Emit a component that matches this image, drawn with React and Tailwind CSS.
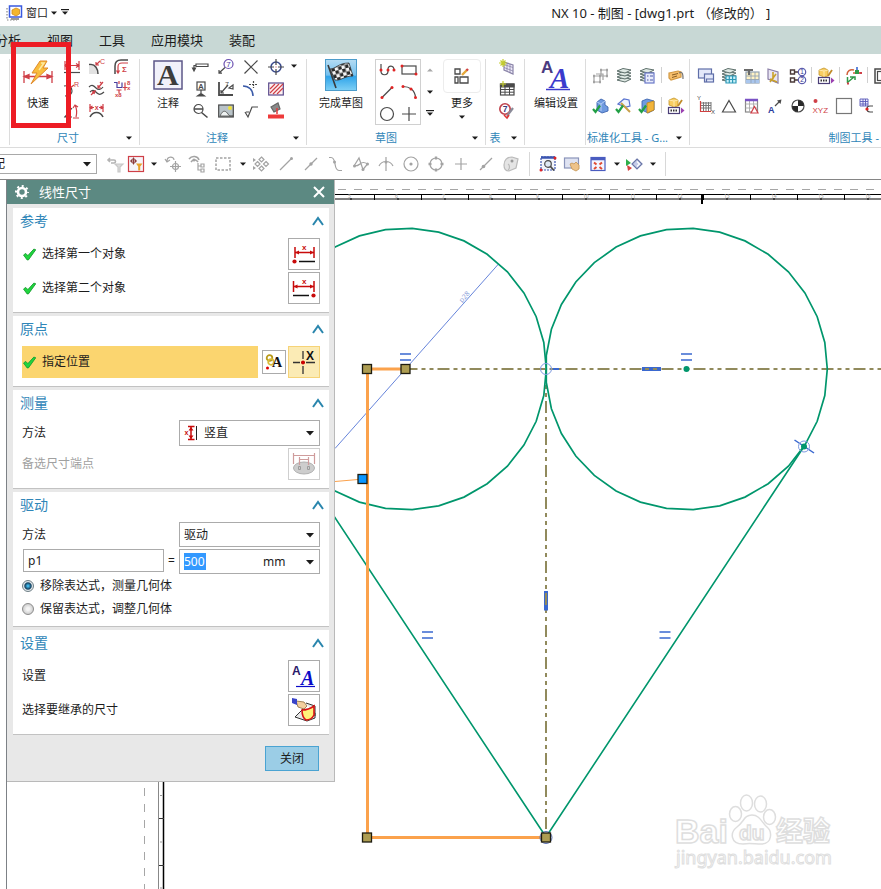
import React from 'react';

const RED = '#cf3f47';
const INK = '#4a4a4a';
const GREY = '#a3a3a3';

/* ---------- small building blocks ---------- */

function Icon({ children, className = 'h-4 w-4' }) {
  return (
    <svg viewBox="0 0 16 16" className={`block shrink-0 overflow-visible ${className}`} fill="none" stroke={INK} strokeWidth="1.2" aria-hidden="true">
      {children}
    </svg>
  );
}

function Caret({ up, bar, light, size = 'h-[6px] w-[6px]' }) {
  return (
    <svg viewBox="0 0 6 6" className={`block shrink-0 overflow-visible ${size}`} aria-hidden="true">
      {bar && <path d="M-1 -1h8v1.2h-8z" fill="#1c1c1c" />}
      <path d={up ? 'M0 4.5L3 1.5L6 4.5z' : 'M0 1.5h6L3 4.8z'} fill={light ? '#a8a8a8' : '#1c1c1c'} />
    </svg>
  );
}

function T({ x, y, size = 8, fill = INK, children, bold, serif, italic }) {
  return (
    <text
      x={x}
      y={y}
      fontSize={size}
      fill={fill}
      stroke="none"
      fontWeight={bold ? 700 : 400}
      fontStyle={italic ? 'italic' : 'normal'}
      fontFamily={serif ? 'Liberation Serif, serif' : 'Liberation Sans, sans-serif'}
    >
      {children}
    </text>
  );
}

const Layers = () => (
  <>
    {[11, 8, 5, 2].map((y) => (
      <path key={y} d={`M1 ${y + 1}l6-2.5 8 1.5-6 3z`} fill="#dfe9e4" stroke="#5d6f6b" strokeWidth="1" />
    ))}
  </>
);

const Tick = () => <path d="M0 11l2.5 3L7 7.5" stroke="#22a045" strokeWidth="2.2" />;

const Dot = ({ x, y, r = 1.5, fill = '#e02424' }) => <circle cx={x} cy={y} r={r} fill={fill} stroke="none" />;

const ICONS = {
  /* dimension group */
  dimLinear: (
    <>
      <path d="M1 2v9M15 2v9M1 6.5h14M4 4.5l-3 2 3 2M12 4.5l3 2-3 2" stroke={RED} />
      <path d="M0 13.5h16" />
    </>
  ),
  dimChamfer: (
    <>
      <path d="M0 7h4c3 0 5 4 5 8H0z" fill="#e2e2e2" stroke="none" />
      <path d="M0 5.5h2c4 0 7 4 7 9.5" strokeWidth="1.5" />
      <path d="M7 6l4-4M7 3v3h3" stroke={RED} />
      <T x={11} y={5} size={7} fill={RED}>C</T>
    </>
  ),
  dimThick: (
    <>
      <path d="M1 15V7c0-4 2-6 6-6h7" strokeWidth="1.5" />
      <path d="M4 14V8c0-3 1-4 4-4h6M2.5 11.5L4 14l1.5-2.5" stroke={RED} />
      <T x={8} y={13} size={8} fill={RED} bold>Σ</T>
    </>
  ),
  dimRadius: (
    <>
      <path d="M0 5c5-1 8 1 8 5s-3 5-7 5" />
      <path d="M6 7l4-3" stroke={RED} />
      <T x={10} y={6} size={7} fill={RED}>R</T>
    </>
  ),
  dimCurve: (
    <>
      <path d="M0 6c3-3 5-1 7 1s5 2 7-1M1 11c3-3 5-1 7 1s4 2 7-1" />
      <path d="M2 14l4-4M14 1l-5 6M3 11l3-1-1 3M9 4v3h3M11 1l2 2" stroke={RED} />
    </>
  ),
  dimOrdinate: (
    <>
      <path d="M0 1.5h3v5h5v-5" stroke="#4a3f9e" />
      <path d="M5 0v3M9 6.5h4M11 1.5v8M5 9v3M2.5 9h5" stroke={RED} />
      <T x={1} y={16} size={6} fill={RED} bold>x8</T>
      <T x={13} y={4} size={6} fill={RED} bold>8</T>
      <T x={13} y={9} size={6} fill={RED} bold>x</T>
    </>
  ),
  dimAngle: (
    <>
      <path d="M0 14h8L1 14l7-9" />
      <path d="M11 2c2 4 2 8 1 12M9 5l2-3 3 2M9 15h6" stroke={RED} />
    </>
  ),
  dimArc: (
    <>
      <path d="M1 1v8M14 1v8M1 4.5h4M10 4.5h4M3.5 3L1 4.5 3.5 6M11.5 3L14 4.5 11.5 6" stroke={RED} />
      <T x={5.8} y={6.5} size={7} fill={RED} bold>x</T>
      <path d="M1 14c3-6 10-6 13 0" strokeWidth="1.6" />
    </>
  ),
  /* annotation group */
  datumTag: <path d="M1 11V6.5h2M3 5h12v2.5H3zM-0.5 9L1 12l1.5-3z" />,
  balloon: (
    <>
      <circle cx="10.5" cy="5" r="4.5" stroke="#6a4fb0" />
      <T x={8.3} y={8} size={8} fill="#4a3aa0">7</T>
      <path d="M7 8.5L1 14M1 11v3.2h3" />
    </>
  ),
  cross: <path d="M1.5 1.5l13 13M14.5 1.5l-13 13" />,
  target: (
    <>
      <circle cx="8" cy="8" r="5" stroke="#3a4a8c" strokeWidth="1.5" />
      <path d="M8 0v6M8 10v6M0 8h6M10 8h6" />
      <path d="M7.5 8h1" stroke={RED} />
    </>
  ),
  datumA: (
    <>
      <rect x="4" y="1" width="8" height="8" fill="#fff" />
      <T x={5.3} y={7.8} size={7.5} bold>A</T>
      <path d="M8 9v5M4.5 15h7L8 12.5z" fill={INK} />
    </>
  ),
  surfaceAngle: (
    <>
      <path d="M1 1v13h14" strokeWidth="1.8" />
      <path d="M3 12l7-8M3 9v3h3" />
      <T x={7} y={6} size={7}>7</T>
      <path d="M11 7l4-3v4z" />
    </>
  ),
  intersect: (
    <>
      <path d="M0 5c6 0 10 4 10 10" stroke="#3a5aa8" strokeWidth="1.5" />
      <path d="M6 3.5h9M10.5 0v7" strokeDasharray="2 1" />
    </>
  ),
  hatch: (
    <>
      <rect x="0.7" y="2" width="14.6" height="12" fill="#fdf1f1" stroke="#5a4a8c" />
      <path d="M2 8l5-5M2 12l9-9M5 13L15 3M9 13l6-6" stroke={RED} />
    </>
  ),
  zoomOut: (
    <>
      <circle cx="5.5" cy="6" r="4.5" />
      <path d="M1 6h9M8.5 9.5l6 5" strokeWidth="1.6" />
    </>
  ),
  image: (
    <>
      <rect x="0.7" y="2" width="14.6" height="12" fill="#b9c3c8" />
      <path d="M2 13c3-7 6-5 8-2s3 2 5 2z" fill="#eef2f2" strokeWidth="0.8" />
      <Dot x={12} y={5} r={2} fill="#f0e23a" />
    </>
  ),
  surface: <path d="M2 9l3 5 4-10h6M3 9h3" />,
  paint: (
    <>
      <path d="M3 4l7-4 2 6-6 3z" fill="#8a8a8a" stroke="#666" />
      <path d="M9 5v6" stroke="#e43b3b" strokeWidth="1.5" />
      <rect x="0" y="11.5" width="16" height="4" fill="#ee3a3a" stroke="none" />
    </>
  ),
  /* sketch group */
  profile: (
    <>
      <path d="M2 2v7c0 5 7 5 7 0V7c0-4 6-4 6 1" />
      <Dot x={2} y={8} />
      <Dot x={9} y={8} />
      <Dot x={15} y={8} />
    </>
  ),
  rectangle: (
    <>
      <rect x="1" y="4" width="14" height="8" />
      <Dot x={1} y={4} />
      <Dot x={15} y={12} />
    </>
  ),
  line: (
    <>
      <path d="M3 13.5L13 3.5" />
      <Dot x={3} y={13.5} />
      <Dot x={13} y={3.5} />
    </>
  ),
  arc: (
    <>
      <path d="M2 2.5c6 0 12 3 12.5 11" />
      <Dot x={2} y={2.5} />
      <Dot x={10} y={5} />
      <Dot x={14.5} y={13.5} />
    </>
  ),
  circle: <circle cx="8" cy="8" r="6.5" />,
  plus: <path d="M8 1v14M1 8h14" />,
  more: (
    <>
      <path d="M1 1h5v5H1zM1 9h3v6H1zM6 9h8v6H6z" strokeWidth="1.3" />
      <path d="M8 7l5-5" stroke="#e5a83a" strokeWidth="2.4" />
      <path d="M12.5 2.5L14 1" stroke="#d04040" strokeWidth="2.4" />
    </>
  ),
  /* table group */
  tableNew: (
    <>
      <path d="M5 3l9 3v9l-9-4z" fill="#efecfa" stroke="#8a84a8" />
      <path d="M5 5.5l9 3M5 8.5l9 3.5M8 4v8M11 5v9" stroke="#8a84a8" strokeWidth="0.8" />
      <path d="M4 0v8M0 4h8M1.5 1.5l5 5M6.5 1.5l-5 5" stroke="#c3cc2e" />
    </>
  ),
  tableParts: (
    <>
      <rect x="1.5" y="3" width="13.5" height="11" fill="#fff" />
      <path d="M1.5 3H15v3H1.5z" fill="#4a4a4a" />
      <path d="M1.5 8.5H15M1.5 11.2H15M6 3v11M10.5 3v11" strokeWidth="1" />
      <path d="M4 0v6M1 3h6" stroke="#c3cc2e" />
    </>
  ),
  tableBalloon: (
    <>
      <circle cx="6" cy="6" r="5.2" stroke="#c0434d" strokeWidth="1.6" fill="#fff" />
      <T x={3.8} y={9} size={8.5} fill="#3a3a7c" bold>7</T>
      <path d="M8 13l6-8" stroke="#8a8a98" strokeWidth="2.2" />
      <path d="M5 12l3 3 2-3" stroke="#d33" strokeWidth="1.6" />
    </>
  ),
  /* standardisation group */
  frames: (
    <>
      <path d="M1 8h6v6H1zM8 2h6v6H8zM3 6h7v6" stroke={GREY} />
      <path d="M0 8h2M6 8h2M0 14h2M6 14h2M7 2h2M13 2h2M13 8h2" stroke={GREY} strokeWidth="2.4" />
    </>
  ),
  layers: <Layers />,
  layersList: (
    <>
      <Layers />
      <rect x="6" y="5" width="9" height="10" fill="#e8ecfb" stroke="#6a78c8" />
      <path d="M8 8h1.5M11 8h3M8 12h1.5M11 12h3" stroke="#4a58a8" />
    </>
  ),
  tag: (
    <>
      <path d="M1 5l9-2 3 1v5l-10 3-2-2z" fill="#f6bf6c" stroke="#d39a44" />
      <path d="M4 7l6-1.5M4 9.5l5-1.5" stroke="#7a5018" strokeWidth="0.9" />
      <path d="M11 5c4-2 4 2 4 6" stroke="#777" />
    </>
  ),
  checkPart: (
    <>
      <path d="M4 4l4-3 4 2v4l3 2v4l-6 2-5-3z" fill="#6f9ae0" stroke="#3f66b0" strokeWidth="0.9" />
      <path d="M4 4l4 2 4-3M8 6v7" stroke="#bcd2f6" strokeWidth="0.9" />
      <Tick />
    </>
  ),
  checkTool: (
    <>
      <path d="M2 6l6-5 5 1 1 6-4 1z" fill="#eef3ff" stroke="#5a74d0" />
      <path d="M5 5l9 9" stroke="#c8a04a" strokeWidth="2" />
      <Tick />
    </>
  ),
  checkBox: (
    <>
      <path d="M3 3l5-2 7 2v9l-6 3-6-3z" fill="#6f9ae0" stroke="#3f66b0" strokeWidth="0.9" />
      <path d="M8 5l7-2v9l-7 3z" fill="#f2b43a" stroke="#c08a20" strokeWidth="0.9" />
      <Tick />
    </>
  ),
  partCard: (
    <>
      <path d="M1 2l5-2 4 2v6l-4 1-5-2z" fill="#f7cd62" stroke="#c4962a" strokeWidth="0.8" />
      <path d="M1 2l5 1 4-1M6 3v6" stroke="#fff0c0" strokeWidth="0.8" />
      <path d="M10 8l4-6" stroke="#c08a2a" strokeWidth="1.8" />
      <rect x="0.5" y="9.5" width="11" height="6" fill="#fff" stroke="#4b3f78" />
      <path d="M2.5 12.5h7" stroke="#333" strokeWidth="2" strokeDasharray="1.5 1" />
      <path d="M13 9.5l3.5 3-3.5 3z" fill="#9b3fb0" stroke="none" />
    </>
  ),
  /* drafting tools group */
  sheets: (
    <>
      <rect x="0.5" y="1" width="13" height="9" fill="#e3e8fa" stroke="#5f6ea8" />
      <rect x="6.5" y="6" width="9" height="8" fill="#e3e8fa" stroke="#5f6ea8" />
      <path d="M8.5 14v-3H15" stroke="#5f6ea8" />
    </>
  ),
  layersTable: (
    <>
      <Layers />
      <path d="M5 8h10v7H5zM5 11.5h10M8.3 8v7M11.6 8v7" fill="#c9f0f8" stroke="#2f9ab8" />
    </>
  ),
  tableTool: (
    <>
      <rect x="2" y="4" width="13" height="11" fill="#fff2c4" stroke="#93a3b4" />
      <path d="M2 12h13v3H2z" fill="#a9c6ee" stroke="none" />
      <path d="M2 8h13M2 11.5h13M7 4v11M11 4v11" stroke="#93a3b4" strokeWidth="0.9" />
      <path d="M0 2h9M5 2v5" stroke="#6a6a6a" strokeWidth="2.2" />
    </>
  ),
  exportSheet: (
    <>
      <path d="M1 1l10 3v11L1 11z" fill="#e9e5f3" stroke="#8b7fa8" />
      <path d="M6 4v7M9 6l-6 8M3 11l7 3" stroke="#c9a02a" strokeWidth="1.6" />
    </>
  ),
  orderBalloon: (
    <>
      <path d="M0.5 2h4v4h-4zM0.5 10h4v4h-4zM5 4h3M5 12h3" stroke="#4a3a3a" strokeWidth="1.4" />
      <circle cx="12" cy="4" r="3.7" fill="#fff" stroke="#5c5cae" />
      <circle cx="12" cy="12" r="3.7" fill="#fff" stroke="#5c5cae" />
      <T x={10.3} y={6.3} size={6.5} fill="#3a3a8c">1</T>
      <T x={10.3} y={14.3} size={6.5} fill="#3a3a8c">2</T>
    </>
  ),
  csys: (
    <>
      <path d="M8 2C4 1 1 3 1 7M7 5h8" stroke="#d0603a" strokeWidth="1.5" />
      <path d="M1.5 9v6M2 14l6-5M4 9h5v3" stroke="#2f9a48" strokeWidth="1.5" />
      <rect x="9" y="2" width="4" height="4" fill="#2f9a48" stroke="none" />
      <path d="M11 -1v3" stroke="#3a6ad0" strokeWidth="1.6" />
      <path d="M13.5 5H16M1 15.5h2" stroke={RED} strokeWidth="2" />
    </>
  ),
  docFrame: (
    <>
      <rect x="1" y="1" width="14" height="14" strokeWidth="1.5" />
      <rect x="3.5" y="3.5" width="9" height="9" />
    </>
  ),
  gridXY: (
    <>
      <path d="M3 5h10M3 7.5h10M3 10h10M5.5 4v9M8 4v9M10.5 4v9M13 4v9" stroke="#777" strokeWidth="1" />
      <path d="M2.5 3v10.5H13" stroke="#d04040" />
      <T x={-1} y={2} size={6}>Y</T>
      <T x={13} y={16} size={6}>X</T>
    </>
  ),
  triangle: <path d="M8 2.5L14.5 14h-13z" />,
  tableDelta: (
    <>
      <rect x="1.5" y="2" width="12" height="12" fill="#fff" stroke="#888" />
      <path d="M1.5 6h12M1.5 10h12M5.5 2v12M9.5 2v12" stroke="#aaa" strokeWidth="0.9" />
      <path d="M1 2h13" stroke="#7a52c4" strokeWidth="2.5" />
      <path d="M10.5 8.5L14 15H7z" fill="#fff" stroke={RED} />
    </>
  ),
  arrowA: (
    <>
      <T x={1} y={15} size={9} fill="#2c3c9c" bold>A</T>
      <path d="M8 8l5-5" />
      <path d="M14.5 1.5l-1 4.5-3.5-3.5z" fill={INK} stroke="none" />
    </>
  ),
  centerMark: (
    <>
      <circle cx="8" cy="8" r="6" fill="#fff" />
      <path d="M8 8V2a6 6 0 0 1 6 6zM8 8v6a6 6 0 0 1-6-6z" fill="#2a2a2a" stroke="none" />
    </>
  ),
  xyz: (
    <>
      <Dot x={2.5} y={3} r={2} fill={RED} />
      <T x={-0.5} y={15} size={8} fill={RED}>XYZ</T>
    </>
  ),
  blank: <rect x="0.5" y="0.5" width="15" height="15" fill="#fff" stroke="#777" />,
  tableLink: (
    <>
      <path d="M1 1h8v7H1zM1 3.5h8M1 6h8M4 1v7M6.5 1v7" stroke="#5a5ab8" fill="#eef" strokeWidth="0.9" />
      <path d="M14 8h-3c-2 0-3 1-3 3s1 3 3 3h3" />
      <Dot x={8} y={11} r={1.6} fill="#d22" />
    </>
  ),
  /* selection bar */
  filterOff: (
    <>
      <path d="M1 4h6c2 0 2 3 0 3H4M3 2L1 4l2 2" stroke="#b4b4b4" strokeWidth="1.6" />
      <path d="M8 8h8l-3 3v5h-2v-5z" fill="#dcdcdc" stroke="#c8c8c8" />
    </>
  ),
  filterOn: (
    <>
      <rect x="0.5" y="0.5" width="15" height="15" fill="#f5f5fa" stroke={RED} />
      <circle cx="5.5" cy="5" r="2.2" stroke="#8a3a3a" strokeWidth="1" />
      <path d="M5.5 1.5v7M2 5h7" stroke="#8a3a3a" strokeWidth="1" />
      <path d="M8 7.5h6.5l-2.3 3v4h-2v-4z" fill="#e8a22a" stroke="none" />
    </>
  ),
  rotatePoint: (
    <>
      <path d="M2 5C2 0 9 0 9 4M0 3l2 3 3-2" stroke={GREY} />
      <circle cx="10.5" cy="10.5" r="3" stroke={GREY} />
      <path d="M10.5 5v11M5 10.5h11" stroke={GREY} />
    </>
  ),
  tree: (
    <>
      <path d="M0 3c3-4 9-3 10 1M2 6c2-3 5-3 7 0" stroke={GREY} strokeWidth="1.5" />
      <Dot x={5} y={4} fill={GREY} />
      <path d="M9 7v7h3M9 10h3M12 8h3v3h-3zM12 13h3v3h-3z" stroke={GREY} />
    </>
  ),
  marquee: <path d="M1 2h14v12H1z" stroke={GREY} strokeDasharray="2.5 1.5" strokeWidth="1.5" />,
  snapMove: (
    <>
      <path d="M8.5 1l2.5 2.5L8.5 6 6 3.5zM8.5 10l2.5 2.5L8.5 15 6 12.5zM13 5.5L15.500 8 13 10.5 10.500 8zM4.500 5.5L7 8l-2.500 2.5L2 8z" stroke={GREY} />
      <path d="M0 2l3 2-3 2zM0 10l3 2-3 2z" fill={GREY} stroke="none" />
    </>
  ),
  endPoint: (
    <>
      <path d="M2 14L13.5 2.5" stroke={GREY} />
      <Dot x={13.5} y={2.5} fill={GREY} />
    </>
  ),
  midPoint: (
    <>
      <path d="M2 14L14 2" stroke={GREY} />
      <Dot x={8} y={8} fill={GREY} r={1.7} />
    </>
  ),
  control: (
    <>
      <path d="M1 1.5h2c6 0 2 13 8 13h3" stroke={GREY} />
      <Dot x={6.5} y={6} fill={GREY} />
    </>
  ),
  spline: (
    <>
      <path d="M1 10L6 2l4 11.5L14.5 8M1 10c3 0 5-1 6-2s3-3 7.5 0" stroke={GREY} />
      <Dot x={1.5} y={10} fill={GREY} />
      <Dot x={10} y={13.5} fill={GREY} />
      <Dot x={14.5} y={8} fill={GREY} />
    </>
  ),
  crossPoint: (
    <>
      <path d="M8 1v14M1 10c3-6 11-6 14 0" stroke={GREY} />
      <Dot x={8} y={6} fill={GREY} />
    </>
  ),
  arcCenter: (
    <>
      <circle cx="8" cy="8" r="7" stroke={GREY} />
      <Dot x={8} y={8} fill={GREY} r={1.6} />
    </>
  ),
  quadrant: (
    <>
      <circle cx="8" cy="8" r="6" stroke={GREY} />
      <path d="M8 .5v3M8 12.5v3M.5 8h3M12.5 8h3" stroke={GREY} strokeWidth="2.4" />
    </>
  ),
  point: <path d="M8 2v12M2 8h12" stroke={GREY} />,
  onCurve: (
    <>
      <path d="M2 14L14 2" stroke={GREY} />
      <Dot x={5.5} y={10.5} fill={GREY} r={1.8} />
    </>
  ),
  onFace: (
    <>
      <path d="M1 9c0-5 3-8 8-8l6 2-2 9-7 3c-4 0-5-3-5-6z" fill="#e4e4e4" stroke="#bababa" />
      <path d="M5 14c2-1 2-5 0-6" stroke="#bababa" />
      <Dot x={9} y={5} fill="#999" />
    </>
  ),
  zoomBox: (
    <>
      <rect x="1" y="1" width="14" height="13" fill="#f2f4fb" stroke="#3a54b0" strokeDasharray="2 1" />
      <path d="M1 1.5h14" stroke="#3a54b0" strokeWidth="2.5" />
      <circle cx="8" cy="8" r="3.3" fill="#dfe9f5" />
      <path d="M10.5 10.5l3.5 4" strokeWidth="1.8" />
      <Dot x={1} y={14} />
      <Dot x={15} y={2} />
    </>
  ),
  pan: (
    <>
      <rect x="0.5" y="2" width="14" height="10" fill="#dfe3f2" stroke="#8a94ba" />
      <path d="M6 8l2-1 2 1 2-2 3 3v4l-3 2-4-2z" fill="#eec38a" stroke="#c49452" strokeWidth="0.8" />
    </>
  ),
  fit: (
    <>
      <rect x="1" y="1.5" width="14" height="13" fill="#f4f5ff" stroke="#4a5cc0" />
      <path d="M1 3h14" stroke="#4a5cc0" strokeWidth="2.5" />
      <path d="M4 6.5l2.5 2M12 6.5l-2.5 2M4 13l2.5-2M12 13l-2.5-2" stroke="#e04a32" strokeWidth="2" />
    </>
  ),
  orient: (
    <>
      <path d="M0 3l5 4-5 3z" fill="#2fae4a" stroke="none" />
      <path d="M1 9l5 3-4 3z" fill="#d84040" stroke="none" />
      <path d="M11 3l5 5-5 5-5-5z" fill="#c4cbe8" stroke="#6a76a8" />
      <path d="M11 5.5L13.5 8 11 10.5" stroke="#fff" />
    </>
  ),
};

function IconButton({ name, className = '' }) {
  return (
    <button type="button" aria-label={name} className={`flex shrink-0 justify-center ${className}`}>
      <Icon>{ICONS[name]}</Icon>
    </button>
  );
}

function Group({ label, className = '', children }) {
  return (
    <section className={`flex shrink-0 flex-col border-r border-[#dcdcdc] ${className}`}>
      <div className="flex flex-1">{children}</div>
      {label && (
        <div className="flex h-[14px] items-center whitespace-nowrap text-[11px] leading-[14px] text-[#2f86b8]">
          <span className="flex-1 text-center">{label}</span>
          <span className="flex w-5 justify-center">
            <Caret />
          </span>
        </div>
      )}
    </section>
  );
}

function BigButton({ label, className, children }) {
  return (
    <button type="button" className={`flex shrink-0 flex-col items-center text-[11px] leading-4 whitespace-nowrap text-[#1c1c1c] ${className}`}>
      <span className="flex h-9 items-start">{children}</span>
      {label}
    </button>
  );
}

const Divider = () => <span className="mx-[2px] mt-[7px] h-4 w-[2px] border-r border-[#d0d0d0]" />;

/* ---------- ribbon ---------- */

function Ribbon() {
  return (
    <div className="relative flex h-[94px] border-b border-[#dcdcdc] pt-[5px] pb-[2px]">
      <Group className="w-[10px]" />
      <Group label="尺寸" className="w-[130px] pl-[7px]">
        <BigButton label="快速" className="w-[42px]">
          <svg viewBox="0 0 32 26" className="h-[26px] w-8" aria-hidden="true">
            <path d="M2 12v12M30 12v12M2 17.5h28M7 15.5l-5 2 5 2zM25 15.5l5 2-5 2z" stroke={RED} strokeWidth="1.3" fill={RED} />
            <path d="M18 2h7l-4 7h5L9 25l6-11h-5z" fill="#f8bd3c" stroke="#e08a2a" strokeWidth="1" />
            <path d="M19 4h3l-5 7" stroke="#fde9a0" fill="none" strokeWidth="1.5" />
          </svg>
        </BigButton>
        <div className="grid w-[75px] auto-rows-[22px] grid-cols-3">
          {['dimLinear', 'dimChamfer', 'dimThick', 'dimRadius', 'dimCurve', 'dimOrdinate', 'dimAngle', 'dimArc'].map((n) => (
            <IconButton key={n} name={n} />
          ))}
        </div>
      </Group>
      <Group label="注释" className="w-[167px] pl-2">
        <BigButton label="注释" className="w-10">
          <svg viewBox="0 0 30 30" className="mt-px h-[30px] w-[30px] overflow-visible" aria-hidden="true">
            <rect x="1" y="1" width="28" height="28" fill="#f1f1fa" stroke="#5c5788" strokeWidth="1.5" />
            <T x={4} y={25} size={30} serif fill="#3c3c3c" bold>A</T>
          </svg>
        </BigButton>
        <div className="grid w-[100px] auto-rows-[22px] grid-cols-4">
          {['datumTag', 'balloon', 'cross', 'target', 'datumA', 'surfaceAngle', 'intersect', 'hatch', 'zoomOut', 'image', 'surface', 'paint'].map((n) => (
            <IconButton key={n} name={n} />
          ))}
        </div>
        <span className="flex w-3 justify-center pt-1">
          <Caret />
        </span>
      </Group>
      <Group label="草图" className="w-[179px]">
        <BigButton label="完成草图" className="ml-[10px] w-12">
          <svg viewBox="0 0 32 32" className="h-8 w-8" aria-hidden="true">
            <defs>
              <linearGradient id="sky" x1="0" y1="0" x2="0" y2="1">
                <stop offset="0" stopColor="#b5dcf3" />
                <stop offset="0.5" stopColor="#74c0ee" />
                <stop offset="0.55" stopColor="#2fa4ea" />
                <stop offset="1" stopColor="#7fd0f5" />
              </linearGradient>
              <pattern id="checker" width="7" height="7" patternUnits="userSpaceOnUse" patternTransform="rotate(-14)">
                <rect width="7" height="7" fill="#f4f4f4" />
                <path d="M0 0h3.5v3.5H0zM3.5 3.5H7V7H3.5z" fill="#2a2a2a" />
              </pattern>
            </defs>
            <rect x="0.5" y="0.5" width="31" height="31" fill="url(#sky)" stroke="#4c9ccb" />
            <path d="M5 10c6 0 8-6 19-6l4 13c-9 0-12 5-18 4z" fill="url(#checker)" stroke="#333" strokeWidth="0.8" />
            <path d="M3 6l8 23" stroke="#3a3a3a" strokeWidth="1.6" />
          </svg>
        </BigButton>
        <div className="ml-[10px] grid h-[66px] w-[46px] auto-rows-[22px] grid-cols-2 border border-[#d0d0d0]">
          {['profile', 'rectangle', 'line', 'arc', 'circle', 'plus'].map((n) => (
            <IconButton key={n} name={n} className="pt-[2px]" />
          ))}
        </div>
        <div className="flex h-[66px] w-[18px] flex-col items-center justify-around">
          <Caret up light />
          <Caret />
          <Caret bar />
        </div>
        <div className="ml-1 flex flex-col items-center">
          <BigButton label="更多" className="w-[38px]">
            <span className="flex h-[34px] w-[38px] items-center justify-center rounded border border-[#ececec]">
              <Icon>{ICONS.more}</Icon>
            </span>
          </BigButton>
          <span className="pt-[3px]">
            <Caret />
          </span>
        </div>
      </Group>
      <Group label="表" className="w-[39px]">
        <div className="ml-[13px] flex flex-col gap-[6px]">
          <IconButton name="tableNew" />
          <IconButton name="tableParts" />
          <IconButton name="tableBalloon" />
        </div>
      </Group>
      <Group className="w-[61px] pl-[2px]">
        <BigButton label="编辑设置" className="w-[58px]">
          <svg viewBox="0 0 30 30" className="mt-[2px] h-[30px] w-[30px] overflow-visible" aria-hidden="true">
            <T x={0} y={12} size={17} fill="#4a3a80" bold>A</T>
            <T x={9} y={27} size={29} fill="#3a3acc" bold serif italic>A</T>
            <path d="M5 28.5h24" stroke="#3a3acc" strokeWidth="1.5" />
          </svg>
        </BigButton>
      </Group>
      <Group label="标准化工具 - G..." className="w-[104px]">
        <div className="ml-[3px] grid content-start pt-px">
          <div className="flex h-[30px]">
            {['frames', 'layers', 'layersList'].map((n) => (
              <IconButton key={n} name={n} className="w-[23px] pt-2" />
            ))}
            <Divider />
            <IconButton name="tag" className="w-[23px] pt-2" />
          </div>
          <div className="flex h-[30px]">
            {['checkPart', 'checkTool', 'checkBox'].map((n) => (
              <IconButton key={n} name={n} className="w-[23px] pt-2" />
            ))}
            <Divider />
            <IconButton name="partCard" className="w-[23px] pt-2" />
          </div>
        </div>
      </Group>
      <section className="flex min-w-0 flex-1 flex-col overflow-hidden">
        <div className="flex-1 pt-px pl-1">
          <div className="flex h-[30px]">
            {['sheets', 'layersTable', 'tableTool', 'exportSheet', 'orderBalloon'].map((n) => (
              <IconButton key={n} name={n} className="w-[23px] pt-2" />
            ))}
            <Divider />
            <IconButton name="partCard" className="w-[23px] pt-2" />
            <Divider />
            <IconButton name="csys" className="w-[23px] pt-2" />
            <Divider />
            <IconButton name="docFrame" className="w-[23px] pt-2" />
          </div>
          <div className="flex h-[30px]">
            {['gridXY', 'triangle', 'tableDelta', 'arrowA', 'centerMark', 'xyz', 'blank', 'tableLink'].map((n) => (
              <IconButton key={n} name={n} className="w-[23px] pt-2" />
            ))}
          </div>
        </div>
        <div className="h-[14px] pr-[2px] text-right text-[11px] leading-[14px] whitespace-nowrap text-[#2f86b8]">制图工具 -</div>
      </section>
      <div className="pointer-events-none absolute -top-3 left-[11px] h-[86px] w-[60px] border-[5px] border-[#ed1c24]" />
    </div>
  );
}

function SelectionBar() {
  const snaps = ['snapMove', 'endPoint', 'midPoint', 'control', 'spline', 'crossPoint', 'arcCenter', 'quadrant', 'point', 'onCurve', 'onFace'];
  return (
    <div className="flex h-8 items-center overflow-hidden border-b border-[#858585]">
      <div className="relative -ml-3 w-[109px]">
        <select aria-label="装配范围" className="block h-5 w-full appearance-none border border-[#a9a9a9] bg-white pl-1 text-xs leading-4 text-[#1c1c1c]">
          <option>配</option>
        </select>
        <span className="pointer-events-none absolute top-[6px] right-[6px]">
          <Caret size="h-2 w-2" />
        </span>
      </div>
      <IconButton name="filterOff" className="ml-[6px] w-[23px]" />
      <IconButton name="filterOn" className="w-5" />
      <span className="flex w-[15px] justify-center"><Caret /></span>
      <IconButton name="rotatePoint" className="w-6" />
      <IconButton name="tree" className="w-6" />
      <IconButton name="marquee" className="w-7" />
      <span className="flex w-[11px] justify-center"><Caret /></span>
      {snaps.map((n) => (
        <IconButton key={n} name={n} className="w-[25px]" />
      ))}
      <span className="mx-[6px] h-6 border-r border-[#d8d8d8]" />
      <IconButton name="zoomBox" className="w-6" />
      <IconButton name="pan" className="w-6" />
      <IconButton name="fit" className="w-7" />
      <span className="flex w-[9px] justify-center"><Caret /></span>
      <IconButton name="orient" className="w-[26px]" />
      <span className="flex w-3 justify-center"><Caret /></span>
      <span className="ml-[6px] h-6 border-r border-[#d8d8d8]" />
    </div>
  );
}

/* ---------- dialog ---------- */

function Panel({ title, children, className = 'pb-2' }) {
  return (
    <section className={`border-b border-[#c2c2c2] bg-white pr-[9px] pl-[9px] ${className}`}>
      <h2 className="mb-1 -ml-[2px] flex h-[26px] items-center justify-between text-sm leading-5 text-[#2f86b8]">
        {title}
        <svg viewBox="0 0 12 10" className="-mr-1 h-[10px] w-3" aria-hidden="true">
          <path d="M1 9L6 2l5 7" fill="none" stroke="#2a86ad" strokeWidth="2" />
        </svg>
      </h2>
      <div className="flex flex-col gap-[2px]">{children}</div>
    </section>
  );
}

const Check = () => (
  <svg viewBox="0 0 12 12" className="mr-[6px] ml-px h-[13px] w-[13px] shrink-0" aria-hidden="true">
    <path d="M0.5 6.5l2-1.5 2 2L10 1l1.8.6L5 11H3.8z" fill="#1fd63e" stroke="#179a2e" strokeWidth="0.8" />
  </svg>
);

function ToolButton({ label, className = 'border-[#ababab] bg-white', children }) {
  return (
    <button type="button" aria-label={label} className={`flex h-8 w-8 shrink-0 items-center justify-center border ${className}`}>
      {children}
    </button>
  );
}

function PickDim({ left }) {
  const a = left ? 3 : 1.5;
  return (
    <svg viewBox="0 0 24 24" className="h-6 w-6" aria-hidden="true">
      <path d={`M${a} 5v11M22 5v11M${a} 10.5H22`} stroke="#c80a0a" strokeWidth="1.5" fill="none" />
      <path d={`M${a + 4} 8.5l-4 2 4 2zM18 8.5l4 2-4 2z`} fill="#c80a0a" />
      <T x={10} y={8} size={8} fill="#c80a0a" bold>x</T>
      <path d={left ? 'M7 19.5h16' : 'M1 19.5h16'} stroke="#111" strokeWidth="1.5" />
      <circle cx={left ? 2.5 : 21.5} cy="19.5" r="2.1" fill="#c80a0a" />
    </svg>
  );
}

const FIELD = 'h-full w-full min-w-0 flex-1 appearance-none bg-transparent text-xs leading-4 outline-none';

function Combo({ className = 'h-[25px]', children }) {
  return (
    <div className={`relative flex w-[141px] shrink-0 items-center border border-[#ababab] bg-white pr-1 ${className}`}>
      {children}
      <span className="pointer-events-none absolute right-[5px]">
        <Caret size="h-2 w-2" />
      </span>
    </div>
  );
}

function LinearDimensionDialog() {
  return (
    <form className="relative ml-[7px] w-[328px] border-r border-b border-[#b9b9b9] bg-[#e8e8e8] pb-[10px] text-xs leading-4 text-[#1c1c1c]">
      <header className="flex h-6 items-center bg-[#5c8982] pr-[9px] pl-[7px] text-[13px] leading-5 text-white">
        <svg viewBox="0 0 16 16" className="mr-[9px] h-4 w-4" fill="none" stroke="#fff" aria-hidden="true">
          <circle cx="8" cy="8" r="4" strokeWidth="2.6" />
          <circle cx="8" cy="8" r="6" strokeWidth="2" strokeDasharray="2 2.712" strokeDashoffset="1" />
        </svg>
        线性尺寸
        <button type="button" aria-label="关闭窗口" className="ml-auto">
          <svg viewBox="0 0 12 12" className="h-3 w-3" aria-hidden="true">
            <path d="M1 1l10 10M11 1L1 11" stroke="#fff" strokeWidth="2" />
          </svg>
        </button>
      </header>

      <div className="flex flex-col gap-[3px] pt-1 pr-[5px] pl-[6px]">
        <Panel title="参考">
          <div className="flex h-8 items-center">
            <Check />
            选择第一个对象
            <span className="ml-auto"><ToolButton label="第一个对象"><PickDim left /></ToolButton></span>
          </div>
          <div className="flex h-8 items-center">
            <Check />
            选择第二个对象
            <span className="ml-auto"><ToolButton label="第二个对象"><PickDim /></ToolButton></span>
          </div>
        </Panel>

        <Panel title="原点">
          <div className="flex h-8 items-center">
            <div className="mr-1 flex h-full flex-1 items-center bg-[#fbd56f]">
              <Check />
              指定位置
            </div>
            <button type="button" aria-label="注释放置" className="mr-[2px] flex h-6 w-6 items-center justify-center border border-[#ababab] bg-white">
              <svg viewBox="0 0 18 18" className="h-[18px] w-[18px]" aria-hidden="true">
                <circle cx="4.5" cy="5" r="2.8" fill="none" stroke="#b99a1a" strokeWidth="1.8" />
                <circle cx="6" cy="9" r="2.8" fill="none" stroke="#d9bc3a" strokeWidth="1.8" />
                <T x={7} y={14} size={14} fill="#111" bold serif>A</T>
                <circle cx="2.5" cy="15" r="1.5" fill="#d00" />
              </svg>
            </button>
            <ToolButton label="指定位置" className="border-[#f6d377] bg-[#fbebb5]">
              <svg viewBox="0 0 24 24" className="h-6 w-6" aria-hidden="true">
                <path d="M11 1v8M11 16v8M1 12.5h7M14 12.5h9M9 12.5h4" stroke="#333" strokeWidth="1.3" />
                <T x={14} y={10} size={12} fill="#111" bold>X</T>
                <circle cx="11" cy="12.5" r="1.9" fill="#d00000" />
              </svg>
            </ToolButton>
          </div>
        </Panel>

        <Panel title="测量">
          <div className="flex h-[26px] items-center justify-between">
            <label htmlFor="measure-method">方法</label>
            <Combo className="h-[26px]">
              <svg viewBox="0 0 12 16" className="mr-[7px] ml-[5px] h-4 w-3 shrink-0 overflow-visible" aria-hidden="true">
                <path d="M3 1.5h6.5M3 14.5h6.5M6 2v12" stroke="#c80a0a" strokeWidth="1.5" />
                <path d="M6 2l2.5 3.5h-5zM6 14l2.5-3.5h-5z" fill="#c80a0a" />
                <T x={-0.5} y={10} size={7} fill="#c80a0a" bold>x</T>
                <path d="M11.5 1v14" stroke="#222" />
              </svg>
              <select id="measure-method" className={FIELD}>
                <option>竖直</option>
              </select>
            </Combo>
          </div>
          <div className="flex h-8 items-center justify-between text-[#a0a0a0]">
            备选尺寸端点
            <ToolButton label="备选尺寸端点" className="border-[#cfcfcf] bg-white">
              <svg viewBox="0 0 24 24" className="h-6 w-6" fill="none" aria-hidden="true">
                <ellipse cx="12" cy="16" rx="10.5" ry="6" fill="#cdcdcd" stroke="#b0b0b0" />
                <path d="M1.5 1v11M22.5 1v11M1.5 3.5h21M7.5 5v8M16.5 5v8M7.5 7.5h9" stroke="#cf9c9c" strokeWidth="1.2" />
                <path d="M6.5 14.5h2v3h-2zM15.5 14.5h2v3h-2z" stroke="#9c9c9c" />
              </svg>
            </ToolButton>
          </div>
        </Panel>

        <Panel title="驱动" className="pb-[6px]">
          <div className="flex h-[25px] items-center justify-between">
            <label htmlFor="drive-method">方法</label>
            <Combo>
              <select id="drive-method" className={`${FIELD} pl-1`}>
                <option>驱动</option>
              </select>
            </Combo>
          </div>
          <div className="flex h-[25px] items-start justify-between">
            <input aria-label="表达式名称" defaultValue="p1" className="ml-px h-[23px] w-[141px] border border-[#ababab] bg-white px-1 text-xs leading-4" />
            <span className="leading-6">=</span>
            <Combo>
              <input aria-label="尺寸值" defaultValue="500" className="ml-1 h-[17px] w-[22px] bg-[#3399ff] text-xs leading-4 text-white" />
              <select aria-label="单位" className={`${FIELD} pl-[57px]`}>
                <option>mm</option>
              </select>
            </Combo>
          </div>
          <div className="-mt-[2px]">
            {['移除表达式，测量几何体', '保留表达式，调整几何体'].map((text, i) => (
              <label key={text} className="flex h-[23px] items-center gap-[6px]">
                <input
                  type="radio"
                  name="expression"
                  defaultChecked={i === 0}
                  className="h-3 w-3 appearance-none rounded-full border border-[#8c8c8c] bg-[radial-gradient(circle,#f4f4f4_20%,#cfcfcf_70%)] checked:border-[#6f7f86] checked:bg-[radial-gradient(circle,#3fb4e6_10%,#14405e_45%,#dfe6ea_60%)]"
                />
                {text}
              </label>
            ))}
          </div>
        </Panel>

        <Panel title="设置">
          <div className="flex h-8 items-center justify-between">
            设置
            <ToolButton label="设置">
              <svg viewBox="0 0 24 24" className="h-6 w-6 overflow-visible" aria-hidden="true">
                <T x={0} y={11} size={12} fill="#2a1a6a" bold>A</T>
                <T x={9} y={21} size={20} fill="#0a0ac8" bold serif italic>A</T>
                <path d="M4 22.5h19" stroke="#0a0ac8" strokeWidth="1.2" />
              </svg>
            </ToolButton>
          </div>
          <div className="flex h-8 items-center justify-between">
            选择要继承的尺寸
            <ToolButton label="选择要继承的尺寸">
              <svg viewBox="0 0 24 24" className="h-6 w-6" aria-hidden="true">
                <path d="M3 19l8-8 12 4v5l-8 3zM14 5l9 3v10" fill="#e9e9e9" stroke="#333" />
                <path d="M10 12c4 0 8-1 12-4v9c-2 4-5 5-8 5-3-2-4-5-4-10z" fill="#fff27a" stroke="#d81414" strokeWidth="1.6" />
                <path d="M4 3l8 1 3 4-3 3-6-2z" fill="#f3cf9e" stroke="#8a6a3a" strokeWidth="0.8" />
                <path d="M0 0l5 1v6l-5-2z" fill="#3a44c8" />
              </svg>
            </ToolButton>
          </div>
        </Panel>
      </div>

      <div className="flex justify-end pt-[11px] pr-[15px]">
        <button type="button" className="h-[25px] w-[54px] border border-[#4aa3d2] bg-[#9bcde6]">关闭</button>
      </div>
    </form>
  );
}

/* ---------- drawing canvas ---------- */

const SKETCH = '#00966c';
const AXIS = '#918a5c';
const HINT = '#3a68cf';

// circles are displayed as faceted curves
function facets(cx, cy, r, n = 33) {
  return Array.from({ length: n }, (_, i) => {
    const a = (i * 2 * Math.PI) / n;
    return `${(cx + r * Math.cos(a)).toFixed(1)},${(cy - r * Math.sin(a)).toFixed(1)}`;
  }).join(' ');
}

const Handle = ({ x, y, fill = '#ad9d52' }) => (
  <rect x={x - 4.5} y={y - 4.5} width="9" height="9" fill={fill} stroke="#1e1c10" strokeWidth="1.3" />
);

const Equal = ({ x, y }) => <path d={`M${x - 5.5} ${y - 3}h11M${x - 5.5} ${y + 3}h11`} stroke={HINT} strokeWidth="1.7" />;

function Canvas() {
  const ticks = Array.from({ length: 12 }, (_, i) => 374 + i * 47);
  return (
    <svg className="absolute inset-0 h-full w-full" fill="none" aria-label="草图">
      <g transform="translate(0 -180)">
        <path d="M6.5 180v1200" stroke="#7d8186" />
        <path d="M338 189.5h1600" stroke="#a6a6a6" strokeDasharray="8 8" />
        <path d="M335 194.5h1600M335 199h1600" stroke="#000" strokeWidth="1.2" />
        {ticks.map((x, i) => (
          <g key={x}>
            <path d={`M${x + 0.5} 195v5M${x - 23} 198v2`} stroke="#000" />
            <text x={x - 26} y="198" fontSize="5" fill="#999">{i + 5}</text>
          </g>
        ))}
        <path d="M702 195v9" stroke="#000" strokeWidth="2" />
        <path d="M144.5 788v600" stroke="#a6a6a6" strokeDasharray="8 8" />
        <path d="M158.5 781v600" stroke="#888" />
        <path d="M163.5 781v600" stroke="#000" strokeWidth="1.5" />
        <path d="M159 818.5h5M159 865.5h5" stroke="#333" />
        <path d="M160 795.5h2M160 842h2M160 888h2" stroke="#999" />

        <path d="M498.5 264L335 448.5" stroke="#5576d6" strokeWidth="0.9" />
        <text x="0" y="0" fontSize="7" fill="#8ea2da" transform="translate(462 303) rotate(-48)">p28</text>

        <path d="M405.5 369H1900" stroke={AXIS} strokeWidth="2" strokeDasharray="12 4 4 4 4 4" />
        <path d="M546 369V837" stroke={AXIS} strokeWidth="2" strokeDasharray="12 4 4 4 4 4" />
        <polygon points={facets(405.5, 369, 140.8)} stroke={SKETCH} strokeWidth="1.7" />
        <polygon points={facets(686.5, 369, 140.8)} stroke={SKETCH} strokeWidth="1.7" />
        <path d="M288 446.5L546 837L804 446.5" stroke={SKETCH} strokeWidth="1.6" />

        <path d="M335 481.5L358 479.5" stroke="#fba24c" />
        <path d="M405.5 369H367.5V837.5H546" stroke="#fba24c" strokeWidth="3" />

        <circle cx="546" cy="369" r="5.5" stroke="#7d9ae0" />
        <path d="M553 369h6" stroke={HINT} strokeWidth="2" />
        <path d="M642 369h19M546 591v19.5" stroke={HINT} strokeWidth="4" />
        <path d="M645 369h4M653 369h4M546 593v12" stroke={AXIS} strokeWidth="2" />
        <Equal x={405.5} y={357} />
        <Equal x={686.5} y={357} />
        <Equal x={427.5} y={635} />
        <Equal x={665} y={635} />
        <circle cx="686.5" cy="369" r="3" fill={SKETCH} />
        <path d="M794.5 440L814 453" stroke={HINT} strokeWidth="1.5" />
        <circle cx="804" cy="446.5" r="5.5" stroke="#7d9ae0" />
        <circle cx="804" cy="446.5" r="3" fill={SKETCH} />

        <Handle x={367} y={369} />
        <Handle x={405.5} y={369} />
        <Handle x={367} y={837.5} />
        <circle cx="546" cy="837.5" r="6" stroke="#5a6fb0" />
        <Handle x={546} y={837.5} />
        <Handle x={362.5} y={479} fill="#0a96ff" />

        {/* site watermark */}
        <g fill="#fff" stroke="#dedede" strokeWidth="1.5">
          <text x="675" y="843" fontSize="34" fontWeight="700" fontFamily="Liberation Sans, sans-serif">Bai</text>
          <ellipse cx="735.5" cy="814" rx="6" ry="7.5" />
          <ellipse cx="746.5" cy="803" rx="6" ry="8" />
          <ellipse cx="760.5" cy="804" rx="6" ry="8" />
          <ellipse cx="769.5" cy="817" rx="6" ry="7.5" />
          <path d="M752 815c8 0 10 8 15 12s6 17-6 17c-6 0-12-1-18 0-13 0-13-12-6-17s7-12 15-12z" />
          <text x="739" y="840" fontSize="21" fontWeight="700" fontFamily="Liberation Sans, sans-serif">du</text>
          <text x="776" y="841" fontSize="27" fontWeight="700">经验</text>
          <text x="676" y="864" fontSize="18" strokeWidth="1">jingyan.baidu.com</text>
        </g>
      </g>
    </svg>
  );
}

export default function App() {
  return (
    <div className="flex min-h-screen flex-col overflow-hidden bg-white font-['Noto_Sans','Noto_Sans_CJK_SC',sans-serif] text-[#1c1c1c]">
      <header className="flex h-[26px] items-center">
        <div className="flex w-1/2 items-center pl-[6px] text-[11px] leading-4">
          <Icon>
            <path d="M1 3v12h10" strokeDasharray="1.5 1.5" stroke="#888" />
            <rect x="3.5" y="1" width="12" height="11" fill="#fff" stroke="#3a5ae0" strokeWidth="1.5" />
            <path d="M6 5l4-2 3.5 1.5V9L10 11 6 9z" fill="#f4b62e" stroke="#d08a1a" strokeWidth="0.8" />
            <path d="M5 14h8" stroke="#999" strokeWidth="2" />
          </Icon>
          <button type="button" className="ml-1 flex items-center gap-[3px]">
            窗口
            <Caret />
          </button>
          <span className="ml-[5px]"><Caret bar /></span>
        </div>
        <h1 className="w-1/2 text-center text-[13px] leading-5 whitespace-pre">NX 10 - 制图 - [dwg1.prt （修改的） ]</h1>
      </header>
      <nav className="flex h-7 items-center overflow-hidden bg-[#c8d8d5]">
        <div className="-ml-[5px] flex gap-[26px] text-[13px] leading-5 whitespace-nowrap">
          {['分析', '视图', '工具', '应用模块', '装配'].map((t) => (
            <a key={t} href="#">{t}</a>
          ))}
        </div>
      </nav>
      <Ribbon />
      <SelectionBar />
      <main className="relative flex-1">
        <Canvas />
        <LinearDimensionDialog />
      </main>
    </div>
  );
}
